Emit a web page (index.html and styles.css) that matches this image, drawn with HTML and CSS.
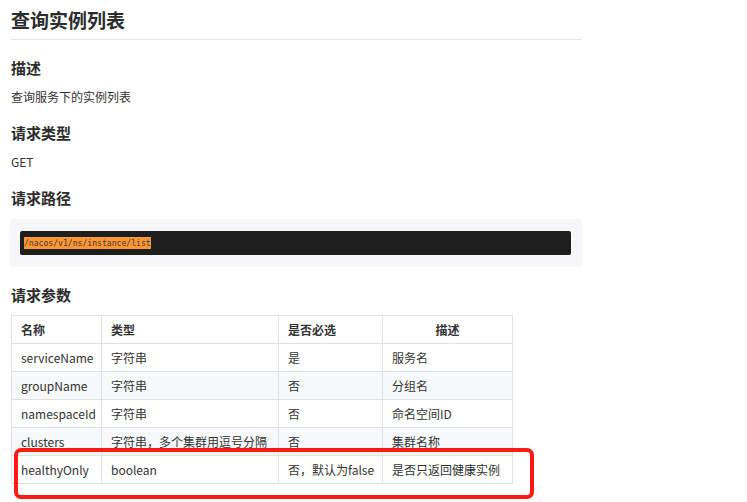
FILE: index.html
```html
<!DOCTYPE html>
<html lang="zh">
<head>
<meta charset="utf-8">
<link rel="stylesheet" href="styles.css">
</head>
<body>
<div class="doc">
  <h1 class="title">查询实例列表</h1>
  <h3 class="sec">描述</h3>
  <p class="txt">查询服务下的实例列表</p>
  <h3 class="sec">请求类型</h3>
  <p class="txt">GET</p>
  <h3 class="sec">请求路径</h3>
  <div class="code-wrap"><pre class="code"><span class="hl">/nacos/v1/ns/instance/list</span></pre></div>
  <h3 class="sec">请求参数</h3>
  <div class="table-wrap">
    <table class="params">
      <colgroup><col class="c1"><col class="c2"><col class="c3"><col class="c4"></colgroup>
      <thead>
        <tr><th>名称</th><th>类型</th><th>是否必选</th><th class="center">描述</th></tr>
      </thead>
      <tbody>
        <tr><td>serviceName</td><td>字符串</td><td>是</td><td>服务名</td></tr>
        <tr class="alt"><td>groupName</td><td>字符串</td><td>否</td><td>分组名</td></tr>
        <tr><td>namespaceId</td><td>字符串</td><td>否</td><td>命名空间ID</td></tr>
        <tr class="alt"><td>clusters</td><td>字符串，多个集群用逗号分隔</td><td>否</td><td>集群名称</td></tr>
        <tr><td>healthyOnly</td><td>boolean</td><td>否，默认为false</td><td>是否只返回健康实例</td></tr>
      </tbody>
    </table>
    <div class="mark"></div>
  </div>
</div>
</body>
</html>
```
FILE: styles.css
```css
html, body {
  margin: 0;
  padding: 0;
  background: #fff;
}
body {
  font-family: "Noto Sans CJK SC", "Noto Sans", sans-serif;
  color: #333;
  font-size: 12px;
  min-height: 502px;
}
.doc {
  width: 571px;
  padding: 8px 0 24px 11px;
}
.title {
  margin: 0;
  font-size: 19px;
  font-weight: bold;
  line-height: 24px;
  padding-bottom: 7px;
  border-bottom: 1px solid #e4e6ea;
  color: #2c2c2c;
}
.sec {
  margin: 18px 0 0 0;
  font-size: 15px;
  font-weight: bold;
  line-height: 20px;
  color: #2c2c2c;
}
.txt {
  margin: 11px 0 0 0;
  font-size: 12px;
  line-height: 16px;
  color: #333;
}
.code-wrap {
  margin: 11px 0 0 -1px;
  background: #f6f7f9;
  border-radius: 3px;
  padding: 12px 11px 12px 10px;
}
.code {
  margin: 0;
  background: #1e1e1e;
  border-radius: 2px;
  padding: 6px 4px;
  font-family: "DejaVu Sans Mono", "Liberation Mono", monospace;
  font-size: 8.1px;
  line-height: 12px;
  color: #6a6a6a;
}
.hl {
  background: #ff9632;
  color: #3a3a3a;
  display: inline-block;
  line-height: 12px;
}
.table-wrap {
  position: relative;
  margin-top: 10px;
}
.params {
  border-collapse: collapse;
  table-layout: fixed;
  width: 501px;
  font-size: 12px;
  color: #333;
}
.c1 { width: 90px; }
.c2 { width: 177px; }
.c3 { width: 104px; }
.c4 { width: 130px; }
.params th, .params td {
  border: 1px solid #dfe2e5;
  height: 27px;
  padding: 0 0 0 9px;
  text-align: left;
  font-weight: normal;
  line-height: 16px;
  white-space: nowrap;
}
.params th {
  font-weight: bold;
}
.params th.center {
  text-align: center;
  padding: 0;
}
.params tr.alt td {
  background: #f6f8fa;
}
.mark {
  position: absolute;
  left: 3px;
  top: 133px;
  width: 512px;
  height: 43px;
  border: 4px solid #ff1a14;
  border-radius: 7px;
}
```
